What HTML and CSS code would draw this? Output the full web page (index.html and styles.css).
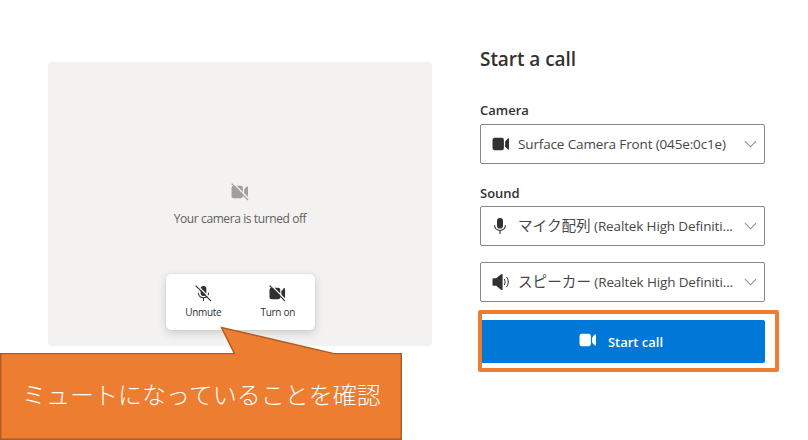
FILE: index.html
```html
<!DOCTYPE html>
<html lang="ja">
<head>
<meta charset="utf-8">
<title>Start a call</title>
<link rel="stylesheet" href="styles.css">
</head>
<body>
<svg class="defs" width="0" height="0" aria-hidden="true">
  <symbol id="camera" viewBox="0 0 18 14">
    <rect x="0.5" y="0.8" width="11.4" height="12.4" rx="2.2"/>
    <path d="M13.1 4.6 15.6 1.7Q17 .6 17 2.2V11.8Q17 13.4 15.6 12.3L13.1 9.4Z"/>
  </symbol>
  <symbol id="mic" viewBox="0 0 16 18">
    <rect x="5" y="1" width="6" height="10.6" rx="2.8"/>
    <path d="M2.6 8.3C2.6 15.2 13.4 15.2 13.4 8.3M8 13.6V17" fill="none" stroke="currentColor" stroke-width="1.1"/>
  </symbol>
  <symbol id="chevron" viewBox="0 0 14 8">
    <path d="M1 1 7 7 13 1" fill="none" stroke="currentColor" stroke-width="1.1"/>
  </symbol>
</svg>
<main class="page">
  <section class="preview">
    <div class="status">
      <svg class="status-icon" viewBox="0 0 18 18">
        <use href="#camera" x="0" y="2" width="18" height="14"/>
        <path class="gap" d="M2 0 18 16"/><path class="slash" d="M.7 .7 17 17"/>
      </svg>
      <p class="status-text">Your camera is turned off</p>
    </div>
    <div class="controls">
      <div class="control">
        <svg class="control-icon" viewBox="0 0 18 18">
          <use href="#mic" x="1" y="0" width="16" height="18"/>
          <path class="gap" d="M2 0 18 16"/><path class="slash" d="M.7 .7 17 17"/>
        </svg>
        <span>Unmute</span>
      </div>
      <div class="control">
        <svg class="control-icon" viewBox="0 0 18 18">
          <use href="#camera" x="0" y="2" width="18" height="14"/>
          <path class="gap" d="M2 0 18 16"/><path class="slash" d="M.7 .7 17 17"/>
        </svg>
        <span>Turn on</span>
      </div>
    </div>
  </section>
  <section class="settings">
    <h1>Start a call</h1>
    <h2 class="camera-label">Camera</h2>
    <div class="select">
      <svg class="icon" viewBox="0 0 18 18"><use href="#camera" y="2" width="18" height="14"/></svg>
      <span class="value">Surface Camera Front (045e:0c1e)</span>
      <svg class="chevron"><use href="#chevron"/></svg>
    </div>
    <h2 class="sound-label">Sound</h2>
    <div class="select">
      <svg class="icon" viewBox="0 0 18 18"><use href="#mic" x="0" width="16" height="18"/></svg>
      <span class="value"><span class="jp">マイク配列</span> (Realtek High Definiti...</span>
      <svg class="chevron"><use href="#chevron"/></svg>
    </div>
    <div class="select speaker">
      <svg class="icon" viewBox="0 0 18 18">
        <path d="M.5 6.2Q.5 5.2 1.5 5.2H4.2L9 1.2Q10.6 .3 10.6 2V16Q10.6 17.7 9 16.8L4.2 12.8H1.5Q.5 12.8 .5 11.8Z"/>
        <path d="M12.3 6Q14.2 9 12.3 12M14.6 4Q18 9 14.6 14" fill="none" stroke="currentColor" stroke-width="1"/>
      </svg>
      <span class="value"><span class="jp">スピーカー</span> (Realtek High Definiti...</span>
      <svg class="chevron"><use href="#chevron"/></svg>
    </div>
    <div class="highlight">
      <button class="start" type="button">
        <svg class="start-icon" viewBox="0 0 18 14"><use href="#camera" width="18" height="14"/></svg>
        <span>Start call</span>
      </button>
    </div>
  </section>
</main>
<aside class="callout">
  <svg class="callout-shape" viewBox="0 0 402 114">
    <path d="M.7 27.6H234.5L221.5 1.5 334 27.6H401.3V113.2H.7Z"/>
  </svg>
  <p class="callout-text">ミュートになっていることを確認</p>
</aside>
</body>
</html>
```
FILE: styles.css
```css
* { box-sizing: border-box; }
body {
  margin: 0;
  width: 808px;
  height: 440px;
  position: relative;
  overflow: hidden;
  background: #fff;
  color: #323130;
  font-family: "Open Sans", "Noto Sans CJK JP", sans-serif;
}
h1, h2, p { margin: 0; }
svg { display: block; flex: none; fill: currentColor; }
.defs { position: absolute; }
.page { display: flex; align-items: flex-start; padding-left: 48px; }
.preview {
  width: 384px;
  height: 284px;
  margin-top: 62px;
  padding-top: 121px;
  border-radius: 4px;
  background: #f3f2f1;
}
.status { display: flex; flex-direction: column; align-items: center; }
.status-icon { width: 18px; height: 18px; color: #a19f9d; --surface: #f3f2f1; }
.status-text {
  margin-top: 9px;
  font-size: 12px;
  line-height: 18px;
  color: #605e5c;
  white-space: nowrap;
  letter-spacing: -0.4px;
}
.gap { fill: none; stroke: var(--surface); stroke-width: 1.4; }
.slash { fill: none; stroke: currentColor; stroke-width: 1.2; }
.controls {
  display: flex;
  width: 149px;
  height: 56px;
  margin: 46px 0 0 118px;
  border-radius: 5px;
  background: #fff;
  box-shadow: 0 3px 8px rgba(0, 0, 0, .16), 0 0 2px rgba(0, 0, 0, .1);
}
.control {
  flex: 1;
  display: flex;
  flex-direction: column;
  align-items: center;
  padding-top: 11px;
  font-size: 10px;
  line-height: 14px;
  letter-spacing: -0.3px;
}
.control-icon { width: 17px; height: 17px; margin-bottom: 3px; --surface: #fff; }
.settings { width: 300px; margin-left: 48px; padding-top: 45px; }
h1 { font-size: 19px; line-height: 28px; font-weight: 600; letter-spacing: -0.05px; }
h2 { font-size: 13px; line-height: 18px; font-weight: 600; }
.camera-label { margin: 28px 0 5px; }
.sound-label { margin: 20px 0 4px; }
.select {
  display: flex;
  align-items: center;
  width: 285px;
  height: 40px;
  padding: 0 7px 0 11px;
  border: 1px solid #8a8886;
  border-radius: 2px;
  background: #fff;
}
.icon { width: 18px; height: 18px; margin-right: 8px; }
.value { flex: 1; font-size: 13.5px; line-height: 20px; white-space: nowrap; color: #484644; letter-spacing: -0.14px; }
.jp { font-family: "Noto Sans CJK JP", sans-serif; font-size: 14.6px; line-height: 18px; letter-spacing: 0; }
.chevron { width: 13px; height: 8px; color: #8a8886; }
.speaker { margin-top: 16px; }
.highlight {
  width: 301px;
  height: 62px;
  margin: 8px 0 0 -2px;
  padding: 6px 0;
  border: 4px solid #ed7d31;
  border-radius: 2px;
}
.start {
  display: flex;
  align-items: center;
  justify-content: center;
  width: 283px;
  height: 43px;
  padding: 0 5px 0 0;
  border: 0;
  border-radius: 0 2px 2px 0;
  background: #0078d7;
  color: #fff;
  font: 600 13px/20px "Open Sans", sans-serif;
}
.start-icon { width: 18px; height: 14px; margin: -4px 11px 0 0; }
.callout { position: absolute; left: 0; top: 326px; width: 402px; height: 114px; }
.callout-shape { width: 402px; height: 114px; }
.callout-shape path { fill: #ed7d31; stroke: #ae5a21; stroke-width: 1.4; }
.callout-text {
  position: absolute;
  left: 22px;
  top: 50px;
  font: 300 24px/36px "Noto Sans CJK JP", sans-serif;
  white-space: nowrap;
  color: #fff;
}
```
